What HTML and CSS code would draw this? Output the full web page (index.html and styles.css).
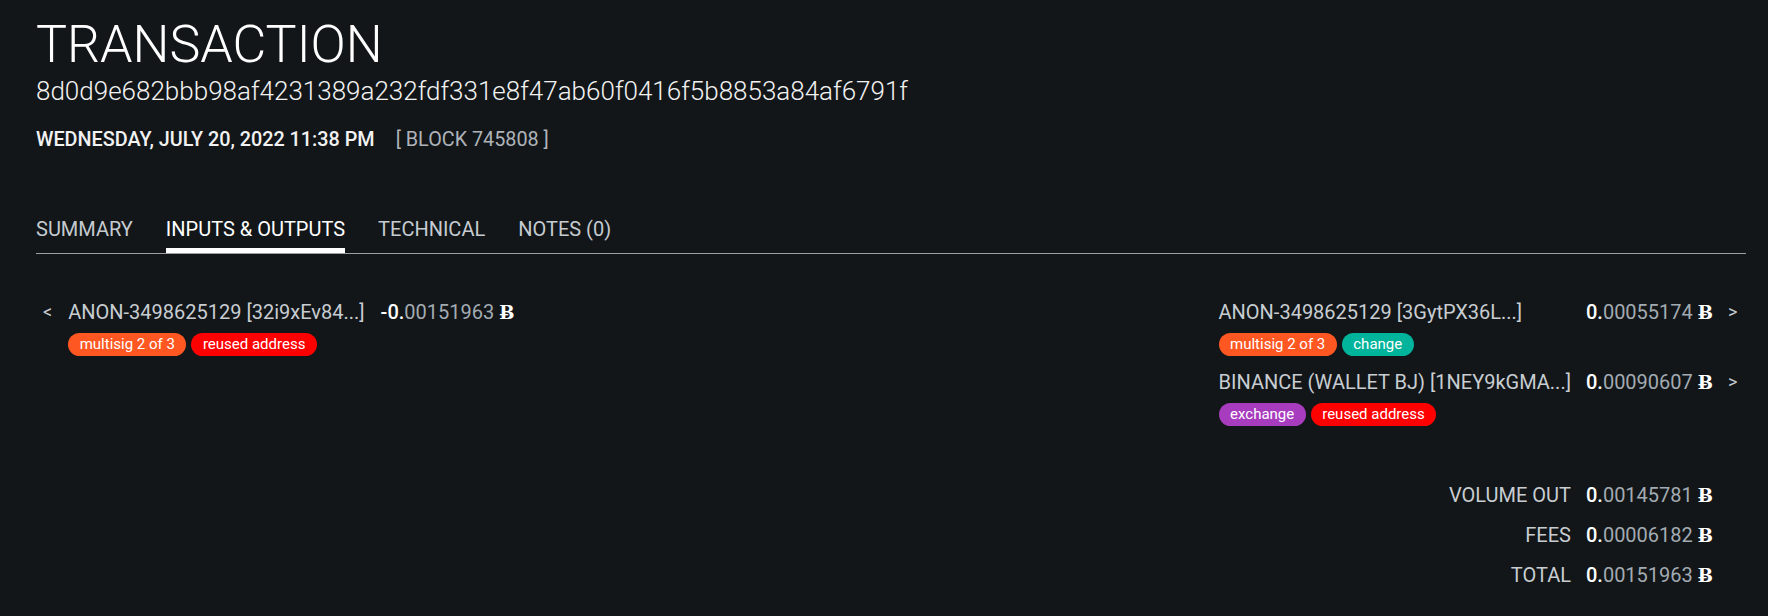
FILE: index.html
```html
<!DOCTYPE html>
<html lang="en">
<head>
<meta charset="utf-8">
<title>Transaction</title>
<link rel="stylesheet" href="styles.css">
</head>
<body>
<main class="page">
  <header class="head">
    <h1 class="title">TRANSACTION</h1>
    <div class="hash">8d0d9e682bbb98af4231389a232fdf331e8f47ab60f0416f5b8853a84af6791f</div>
    <div class="meta">
      <span class="date">WEDNESDAY, JULY 20, 2022 11:38 PM</span>
      <span class="block">[ BLOCK 745808 ]</span>
    </div>
  </header>

  <nav class="tabs">
    <span class="tab">SUMMARY</span>
    <span class="tab active">INPUTS &amp; OUTPUTS</span>
    <span class="tab">TECHNICAL</span>
    <span class="tab">NOTES (0)</span>
  </nav>

  <section class="io">
    <div class="inputs">
      <span class="arrow">&lt;</span>
      <span class="name">ANON-3498625129 [32i9xEv84...]</span>
      <span class="amount"><b>-0.</b>00151963 <i class="btc">Ƀ</i></span>
      <div class="pills">
        <span class="pill orange">multisig 2 of 3</span>
        <span class="pill red">reused address</span>
      </div>
    </div>

    <div class="right">
      <div class="outputs">
        <span class="name">ANON-3498625129 [3GytPX36L...]</span>
        <span class="amount"><b>0.</b>00055174 <i class="btc">Ƀ</i></span>
        <span class="arrow">&gt;</span>
        <div class="pills">
          <span class="pill orange">multisig 2 of 3</span>
          <span class="pill teal">change</span>
        </div>

        <span class="name">BINANCE (WALLET BJ) [1NEY9kGMA...]</span>
        <span class="amount"><b>0.</b>00090607 <i class="btc">Ƀ</i></span>
        <span class="arrow">&gt;</span>
        <div class="pills">
          <span class="pill purple">exchange</span>
          <span class="pill red">reused address</span>
        </div>
      </div>

      <div class="totals">
        <span class="label">VOLUME OUT</span>
        <span class="amount"><b>0.</b>00145781 <i class="btc">Ƀ</i></span>
        <span class="spacer"></span>
        <span class="label">FEES</span>
        <span class="amount"><b>0.</b>00006182 <i class="btc">Ƀ</i></span>
        <span class="spacer"></span>
        <span class="label">TOTAL</span>
        <span class="amount"><b>0.</b>00151963 <i class="btc">Ƀ</i></span>
        <span class="spacer"></span>
      </div>
    </div>
  </section>
</main>
</body>
</html>
```
FILE: styles.css
```css
* { box-sizing: border-box; }
html, body { margin: 0; padding: 0; }
body {
  background: #121619;
  color: #c8cdd2;
  font-family: Roboto, "Liberation Sans", sans-serif;
  width: 1768px;
  height: 616px;
  overflow: hidden;
}
.page {
  padding: 19px 22px 0 36px;
}
.title {
  margin: 0;
  font-size: 52px;
  line-height: 52px;
  font-weight: 300;
  color: #ffffff;
}
.hash {
  margin-top: 4px;
  font-size: 26px;
  line-height: 32px;
  font-weight: 300;
  color: #f2f2f2;
}
.meta {
  margin-top: 21px;
  display: flex;
  gap: 21px;
  font-size: 19.8px;
  line-height: 24px;
}
.date { font-weight: 500; color: #f2f2f2; }
.block { color: #aeb4b9; }

.tabs {
  margin-top: 66px;
  display: flex;
  gap: 33px;
  border-bottom: 1px solid #9aa0a6;
}
.tab {
  font-size: 20px;
  line-height: 22px;
  padding-bottom: 8px;
  border-bottom: 5px solid transparent;
  color: #c5cbd0;
}
.tab.active {
  color: #ffffff;
  border-bottom-color: #ffffff;
}

.io {
  margin-top: 46px;
  display: flex;
  justify-content: space-between;
  align-items: flex-start;
}
.name, .amount, .arrow, .label {
  font-size: 20px;
  line-height: 24px;
  white-space: nowrap;
}
.name { color: #c8cdd2; }
.label { color: #c8cdd2; text-align: right; }
.amount { color: #a3abb2; }
.amount b { font-weight: 500; color: #ffffff; }
.btc {
  font-style: normal;
  font-family: "DejaVu Serif", "Liberation Serif", serif;
  font-weight: 700;
  font-size: 18px;
  color: #ffffff;
}
.arrow { color: #c8cdd2; font-size: 18px; }

.inputs {
  margin-left: 7px;
  display: grid;
  grid-template-columns: auto auto auto;
  column-gap: 16px;
  row-gap: 8px;
}
.inputs .pills { grid-column: 2 / 4; }

.pills {
  display: flex;
  gap: 5px;
}
.pill {
  height: 23px;
  line-height: 23px;
  padding: 0 11.5px;
  border-radius: 12px;
  font-size: 15px;
  color: #ffffff;
  white-space: nowrap;
}
.orange { background: #ff5722; }
.red { background: #ff0000; }
.teal { background: #00b39b; }
.purple { background: #a83cbf; }

.right {
  padding-right: 8px;
  display: flex;
  flex-direction: column;
  align-items: flex-end;
}
.outputs {
  display: grid;
  grid-template-columns: auto auto 10px;
  column-gap: 15px;
  row-gap: 0;
}
.outputs .pills {
  grid-column: 1 / 4;
  margin-top: 8px;
  margin-bottom: 14px;
}
.totals {
  margin-top: 43px;
  display: grid;
  grid-template-columns: auto auto 10px;
  column-gap: 15px;
  row-gap: 15px;
}
```
